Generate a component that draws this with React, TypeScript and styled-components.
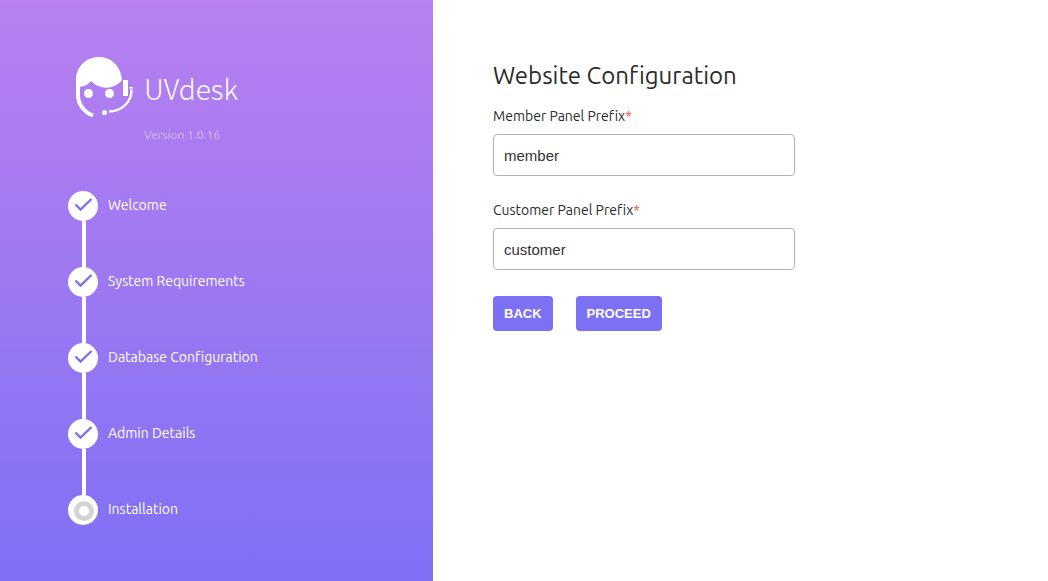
import React from "react";
import styled, { createGlobalStyle } from "styled-components";

const GlobalStyle = createGlobalStyle`
  * { box-sizing: border-box; }
  body {
    margin: 0;
    background: #fff;
    color: #2b2b2b;
    font-family: Ubuntu, "Noto Sans", sans-serif;
    font-size: 14px;
    font-weight: 450;
    font-variant-ligatures: none;
    line-height: 20px;
  }
`;

const Page = styled.div`
  display: grid;
  grid-template-columns: 433fr 615fr;
  min-height: 100vh;
`;

const Sidebar = styled.aside`
  padding: 56px 20px 56px 68px;
  color: #fff;
  background: linear-gradient(180deg, #b880f0 0%, #7f70f4 100%);
`;

const Brand = styled.div`
  display: flex;
  gap: 9px;
  padding-left: 7px;
`;

const Logo = styled.svg`
  width: 60px;
  height: 64px;
`;

const BrandText = styled.div`
  padding-top: 12px;
`;

const BrandName = styled.div`
  font-family: "Noto Sans CJK JP", "Noto Sans", sans-serif;
  font-size: 28px;
  font-weight: 300;
  line-height: 40px;
`;

const Version = styled.div`
  margin-top: 17px;
  font-size: 12px;
  color: rgba(255, 255, 255, 0.5);
`;

const Steps = styled.ol`
  list-style: none;
  margin: 46px 0 0;
  padding: 0;
`;

const Step = styled.li`
  display: flex;
  gap: 10px;
`;

const Rail = styled.div`
  display: flex;
  flex-direction: column;
  width: 30px;
`;

const Marker = styled.span`
  display: flex;
  align-items: center;
  justify-content: center;
  height: 30px;
  border-radius: 50%;
  background: #fff;
`;

const Connector = styled.span`
  width: 4px;
  height: 46px;
  margin-left: 14px;
  background: #fff;
`;

const StepName = styled.span`
  padding-top: 4px;
`;

const Main = styled.main`
  padding: 60px;
`;

const Title = styled.h1`
  margin: 0 0 14px;
  font-size: 24px;
  font-weight: 450;
  line-height: 32px;
`;

const Field = styled.div`
  max-width: 302px;
  margin-bottom: 24px;
`;

const Label = styled.label`
  display: block;
  margin-bottom: 8px;
`;

const Required = styled.span`
  color: #f15849;
`;

const Input = styled.input`
  display: block;
  width: 100%;
  height: 42px;
  padding: 0 10px;
  border: 1px solid #b1b1ae;
  border-radius: 4px;
  background: #fff;
  color: #333;
  font: 15px "Liberation Sans", Arial, sans-serif;
`;

const Actions = styled.div`
  display: flex;
  gap: 23px;
  padding-top: 2px;
`;

const Button = styled.button`
  height: 35px;
  padding: 0 11px;
  border: 0;
  border-radius: 4px;
  background: #7c70f4;
  color: #fff;
  font: bold 13px "Liberation Sans", Arial, sans-serif;
  cursor: pointer;
`;

const steps = [
  { name: "Welcome", done: true },
  { name: "System Requirements", done: true },
  { name: "Database Configuration", done: true },
  { name: "Admin Details", done: true },
  { name: "Installation", done: false },
];

const fields = [
  { id: "member-prefix", label: "Member Panel Prefix", value: "member" },
  { id: "customer-prefix", label: "Customer Panel Prefix", value: "customer" },
];

function StepIcon({ done }: { done: boolean }) {
  return (
    <svg width="30" height="30" viewBox="0 0 30 30" fill="none" aria-hidden="true">
      {done ? (
        <path d="M7.5 13.5 12.5 18.5 23.5 8" stroke="#7c70f4" strokeWidth="2.4" />
      ) : (
        <circle cx="16" cy="16" r="7.5" stroke="#d3d3d3" strokeWidth="5" />
      )}
    </svg>
  );
}

function AgentLogo() {
  return (
    <Logo viewBox="0 0 60 64" fill="#fff" aria-hidden="true">
      <path d="M1 38V24C1 11 11 1 24 1S46 11 47 24C40 33 26 35 16 25C13 29 9 30 5 31V38Z" />
      <path d="M3 36V39C3 48 9 56 18 59.5" fill="none" stroke="#fff" strokeWidth="4" />
      <circle cx="13.5" cy="37.5" r="4.5" />
      <circle cx="34.5" cy="37.5" r="4.5" />
      <rect x="48" y="24" width="5" height="16" />
      <rect x="54" y="31" width="4" height="1.5" />
      <path d="M56.5 33.5C57 46 47 55 34 55.5" fill="none" stroke="#fff" strokeWidth="2.4" />
      <circle cx="29.5" cy="56.5" r="2.6" />
    </Logo>
  );
}

export default function App() {
  return (
    <>
      <GlobalStyle />
      <Page>
        <Sidebar>
          <Brand>
            <AgentLogo />
            <BrandText>
              <BrandName>UVdesk</BrandName>
              <Version>Version 1.0.16</Version>
            </BrandText>
          </Brand>
          <Steps>
            {steps.map((step, i) => (
              <Step key={step.name}>
                <Rail>
                  <Marker>
                    <StepIcon done={step.done} />
                  </Marker>
                  {i < steps.length - 1 && <Connector />}
                </Rail>
                <StepName>{step.name}</StepName>
              </Step>
            ))}
          </Steps>
        </Sidebar>
        <Main>
          <Title>Website Configuration</Title>
          <form onSubmit={(e) => e.preventDefault()}>
            {fields.map((field) => (
              <Field key={field.id}>
                <Label htmlFor={field.id}>
                  {field.label}
                  <Required>*</Required>
                </Label>
                <Input id={field.id} type="text" defaultValue={field.value} />
              </Field>
            ))}
            <Actions>
              <Button type="button">BACK</Button>
              <Button type="submit">PROCEED</Button>
            </Actions>
          </form>
        </Main>
      </Page>
    </>
  );
}
